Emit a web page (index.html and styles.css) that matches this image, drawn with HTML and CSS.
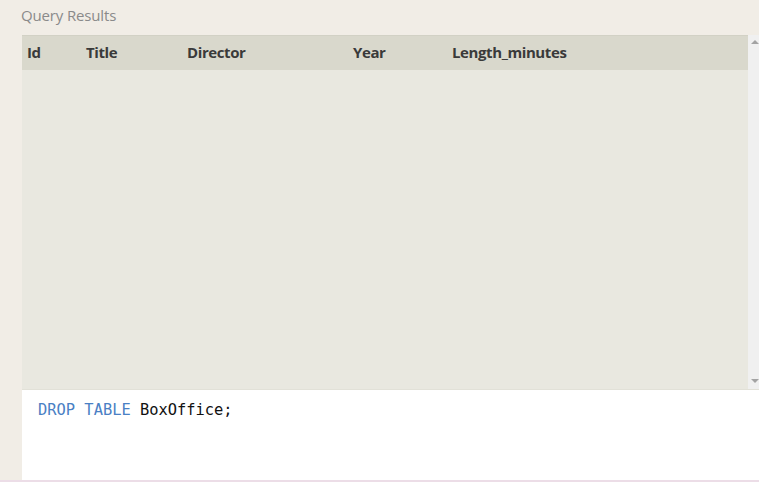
FILE: index.html
```html
<!DOCTYPE html>
<html>
<head>
<meta charset="utf-8">
<link rel="stylesheet" href="styles.css">
</head>
<body>
<div class="page">
  <div class="title">Query Results</div>
  <div class="results">
    <div class="grid">
      <div class="thead">
        <div class="th c-id">Id</div>
        <div class="th c-title">Title</div>
        <div class="th c-dir">Director</div>
        <div class="th c-year">Year</div>
        <div class="th c-len">Length_minutes</div>
      </div>
      <div class="tbody"></div>
    </div>
    <div class="scrollbar">
      <div class="arrow up"></div>
      <div class="arrow down"></div>
    </div>
  </div>
  <div class="editor"><span class="kw">DROP</span> <span class="kw">TABLE</span> BoxOffice;</div>
</div>
<div class="footer"></div>
</body>
</html>
```
FILE: styles.css
```css
html, body {
  margin: 0;
  padding: 0;
  background: #f1ede6;
  overflow: hidden;
}
.page {
  height: 480px;
  padding-left: 22px;
  box-sizing: border-box;
  display: flex;
  flex-direction: column;
}
.title {
  height: 35px;
  box-sizing: border-box;
  padding-top: 5px;
  margin-left: -1px;
  font-family: "Open Sans", sans-serif;
  font-size: 15px;
  color: #8a8a8a;
  letter-spacing: -0.15px;
}
.results {
  display: flex;
  height: 354px;
  background: #e9e8e0;
}
.grid {
  flex: 1;
  display: flex;
  flex-direction: column;
}
.thead {
  height: 35px;
  display: flex;
  align-items: center;
  padding-bottom: 2px;
  background: #d9d8cc;
  border-top: 1px solid #d2d1c5;
  box-sizing: border-box;
  font-family: "Open Sans", sans-serif;
  font-weight: 700;
  font-size: 15px;
  color: #3a3a3a;
  letter-spacing: -0.4px;
}
.th { padding-left: 5px; box-sizing: border-box; }
.c-id { width: 59px; }
.c-title { width: 101px; }
.c-dir { width: 166px; }
.c-year { width: 99px; }
.c-len { flex: 1; }
.tbody { flex: 1; }
.scrollbar {
  width: 11px;
  background: #f0f0f0;
  position: relative;
}
.arrow {
  position: absolute;
  left: 3px;
  width: 0;
  height: 0;
  border-left: 4px solid transparent;
  border-right: 4px solid transparent;
}
.arrow.up { top: 5px; border-bottom: 4px solid #a3a3a3; }
.arrow.down { bottom: 6px; border-top: 4px solid #a3a3a3; }
.editor {
  flex: 1;
  background: #ffffff;
  border-top: 1px solid #e2e1d8;
  padding: 11px 0 0 16px;
  font-family: "DejaVu Sans Mono", monospace;
  font-size: 15.4px;
  color: #111;
}
.kw { color: #4a80c4; }
.footer {
  height: 2px;
  background: #ecdde7;
}
```
